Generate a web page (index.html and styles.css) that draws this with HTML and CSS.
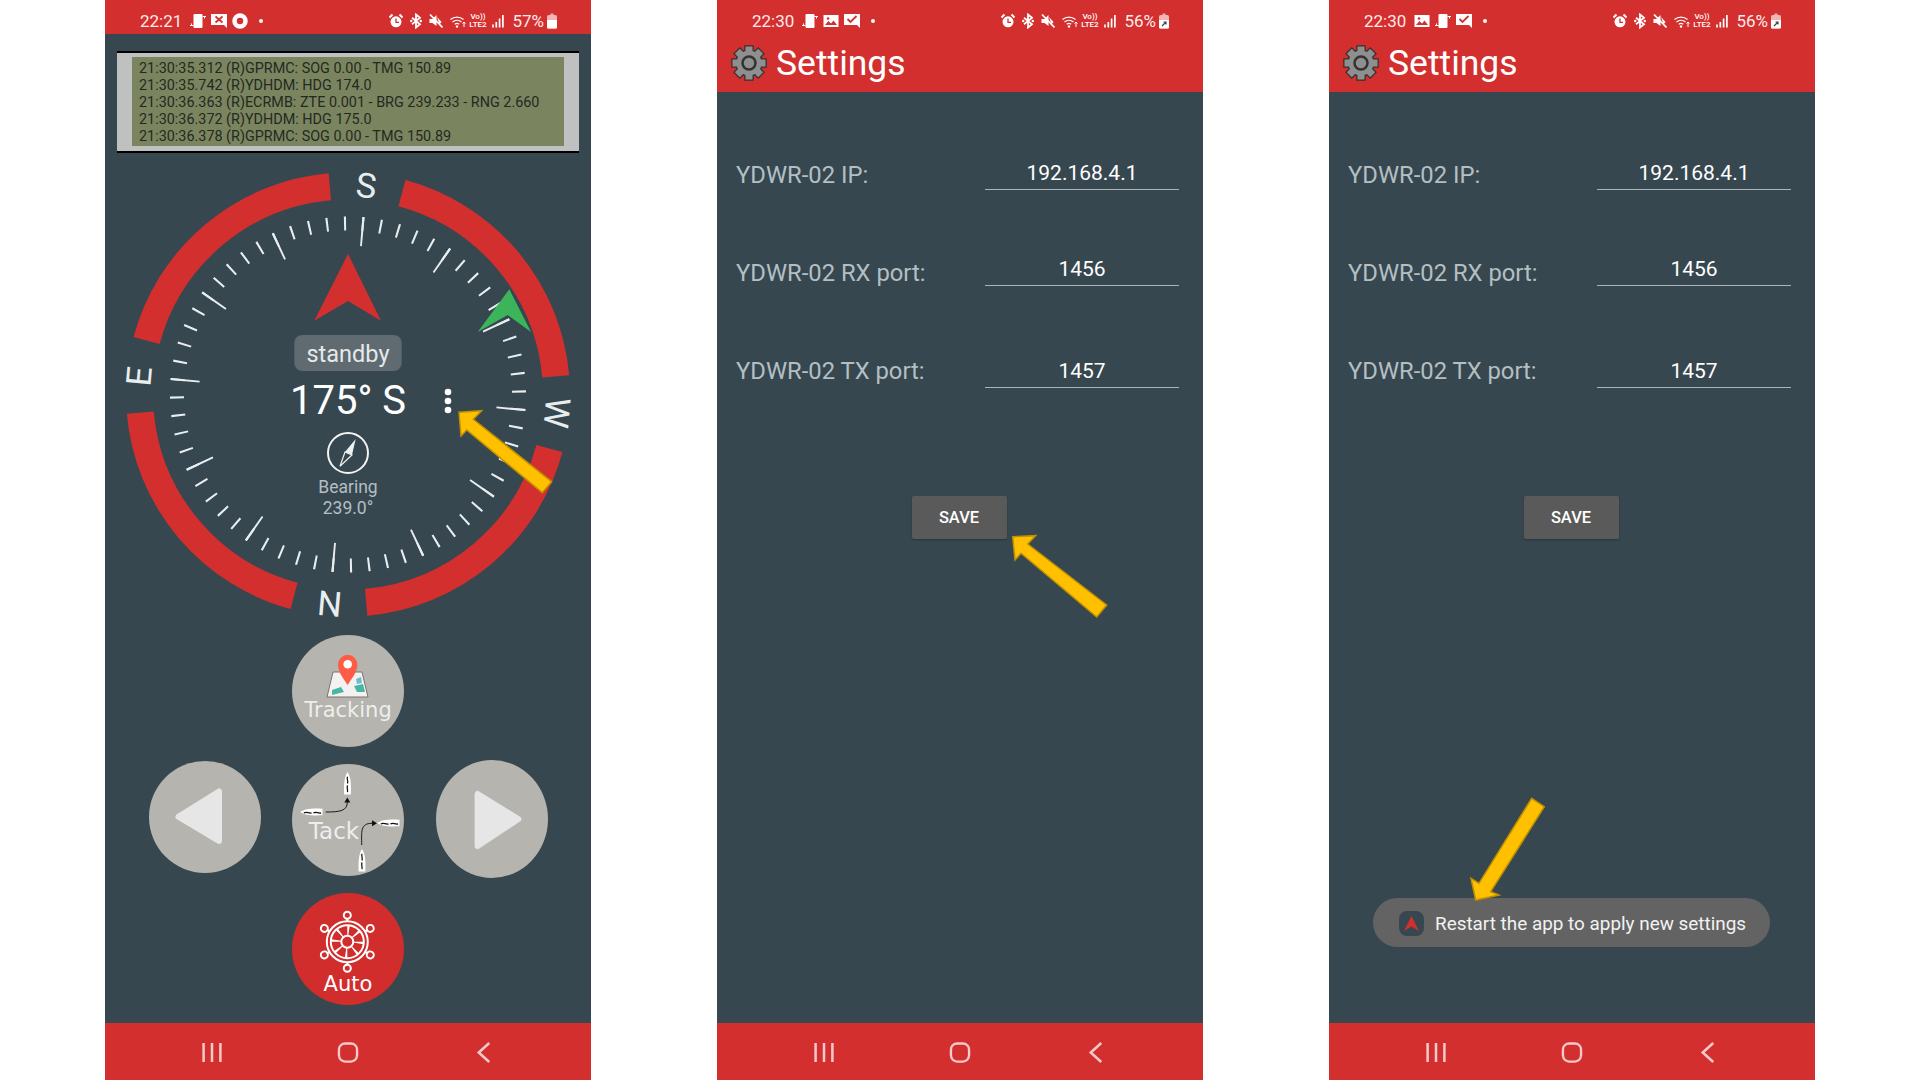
FILE: index.html
```html
<!DOCTYPE html>
<html lang="en">
<head>
    <meta charset="UTF-8">
    <title>Autopilot screens</title>
    <link rel="stylesheet" href="styles.css">
</head>
<body>
<svg class="defs" width="0" height="0">
    <symbol id="ic-phone" viewBox="0 0 16 16">
        <rect x="3.500" y="1" width="9" height="14" rx="1" fill="#fff"/>
        <path d="M0 12.500h3.500M12.500 3.500h3.500M1.500 12.500v-2M14.500 3.500v2" stroke="#fff" stroke-width="1" fill="none"/>
    </symbol>
    <symbol id="ic-xmsg" viewBox="0 0 16 16">
        <path d="M0 1h16v14l-3-3H0z" fill="#fff"/>
        <path d="M4.500 3.500l7 6M11.500 3.500l-7 6" stroke="#d32f2f" stroke-width="1.800"/>
    </symbol>
    <symbol id="ic-checkmsg" viewBox="0 0 16 16">
        <path d="M0 1h16v14l-3-3H0z" fill="#fff"/>
        <path d="M3.500 6l3 3 6-6" stroke="#d32f2f" stroke-width="1.800" fill="none"/>
    </symbol>
    <symbol id="ic-image" viewBox="0 0 16 16">
        <rect x="0.500" y="2" width="15" height="12" fill="#fff"/>
        <path d="M2 12l3.500-4 2.500 2.500 2.500-3L14 12z" fill="#d32f2f"/>
        <circle cx="5" cy="5.500" r="1.300" fill="#d32f2f"/>
    </symbol>
    <symbol id="ic-ring" viewBox="0 0 16 16">
        <circle cx="8" cy="8" r="5.500" fill="none" stroke="#fff" stroke-width="4.500"/>
    </symbol>
    <symbol id="ic-alarm" viewBox="0 0 14 14">
        <circle cx="7" cy="7.800" r="5.500" fill="#fff"/>
        <path d="M7 4.500V8.300H10" stroke="#d32f2f" stroke-width="1.300" fill="none"/>
        <path d="M0.500 3.500l3-3M13.500 3.500l-3-3" stroke="#fff" stroke-width="2"/>
    </symbol>
    <symbol id="ic-bt" viewBox="0 0 12 14">
        <path d="M2 3.800l8 6.400-4 3.300V0.500l4 3.300-8 6.400" stroke="#fff" stroke-width="1.800" fill="none"/>
        <circle cx="1.200" cy="7" r="1.200" fill="#fff"/>
        <circle cx="10.800" cy="7" r="1.200" fill="#fff"/>
    </symbol>
    <symbol id="ic-mute" viewBox="0 0 14 14">
        <path d="M0.500 5h3l4-4v11l-4-3h-3z" fill="#fff"/>
        <path d="M1 0.500l12.500 13" stroke="#fff" stroke-width="1.800"/>
        <path d="M8 3l4.500 5-2 2.500z" fill="#fff"/>
    </symbol>
    <symbol id="ic-wifi" viewBox="0 0 16 14">
        <path d="M0.500 5.500a10 10 0 0 1 13 0M2.500 8a7 7 0 0 1 9 0M4.800 10.300a3.600 3.600 0 0 1 4.400 0" stroke="#fff" stroke-width="1.200" fill="none"/>
        <circle cx="7" cy="12.500" r="1.200" fill="#fff"/>
        <path d="M14 13V8M12.500 9.500L14 8l1.500 1.500" stroke="#fff" stroke-width="1" fill="none"/>
    </symbol>
    <symbol id="ic-signal" viewBox="0 0 12 14">
        <path d="M1 10.500v3M4.300 8v5.500M7.600 4.500v9M10.900 1v12.500" stroke="#fff" stroke-width="1.700"/>
    </symbol>
    <symbol id="ic-batt" viewBox="0 0 10 16">
        <path d="M3.500 0.500h3v1.500h-3z" fill="#f2b5b5"/>
        <rect x="0" y="2" width="10" height="13.500" rx="1.500" fill="#f2b5b5"/>
        <path d="M0 7h10v7a1.500 1.500 0 0 1-1.500 1.500h-7A1.500 1.500 0 0 1 0 14z" fill="#fff"/>
    </symbol>
    <symbol id="ic-charge" viewBox="0 0 10 16">
        <path d="M3.500 0.500h3v1.500h-3z" fill="#f2b5b5"/>
        <rect x="0" y="2" width="10" height="13.500" rx="1.500" fill="#f2b5b5"/>
        <path d="M0 7h10v7a1.500 1.500 0 0 1-1.500 1.500h-7A1.500 1.500 0 0 1 0 14z" fill="#fff"/>
        <path d="M3 13l4-4M4.500 9H7v2.500" stroke="#444" stroke-width="1.200" fill="none"/>
    </symbol>
    <symbol id="ic-nav-recent" viewBox="0 0 20 20">
        <path d="M2 1v18M10 1v18M18 1v18" stroke="#f4c9c9" stroke-width="2.400" fill="none"/>
    </symbol>
    <symbol id="ic-nav-home" viewBox="0 0 22 22">
        <rect x="1.500" y="1.500" width="19" height="19" rx="6.500" stroke="#f4c9c9" stroke-width="2.500" fill="none"/>
    </symbol>
    <symbol id="ic-nav-back" viewBox="0 0 14 20">
        <path d="M12 1L2 10l10 9" stroke="#f4c9c9" stroke-width="2.400" fill="none"/>
    </symbol>
    <g id="gear-shape">
        <circle cx="18" cy="18" r="12.500"/>
        <rect x="14.500" y="1.500" width="7" height="33"/>
        <rect x="14.500" y="1.500" width="7" height="33" transform="rotate(45 18 18)"/>
        <rect x="14.500" y="1.500" width="7" height="33" transform="rotate(90 18 18)"/>
        <rect x="14.500" y="1.500" width="7" height="33" transform="rotate(135 18 18)"/>
    </g>
    <symbol id="ic-gear" viewBox="0 0 36 36">
        <use href="#gear-shape" fill="#333" stroke="#333" stroke-width="2.500"/>
        <use href="#gear-shape" fill="#8f8f8f"/>
        <circle cx="18" cy="18" r="6.500" fill="#8f8f8f" stroke="#333" stroke-width="2.500"/>
    </symbol>
    <symbol id="ic-boat-v" viewBox="0 0 8 24">
        <path d="M4 0C7 5 8 10 7.500 23.500H0.500C0 10 1 5 4 0z" fill="#fff"/>
        <path d="M4 5C3 8 5 9 4 12M4 14C3 17 4.500 18 4 21" stroke="#111" stroke-width="1.300" fill="none"/>
    </symbol>
    <symbol id="ic-boat-h" viewBox="0 0 24 8">
        <path d="M24 4C19 7 14 8 .5 7.500V.5C14 0 19 1 24 4z" fill="#fff" transform="rotate(180 12 4)"/>
        <path d="M4 5C7 3 9 6 12 5M14 5C17 3 19 6 22 5" stroke="#111" stroke-width="1.300" fill="none"/>
    </symbol>
    <path id="ring-arc" d="M53.960 -201.400A208.500 208.500 0 0 1 207.710 -18.170"/>
</svg>

<main class="screens">

    <!-- autopilot -->
    <section class="phone">
        <div class="status">
            <div class="status-left">
                <span class="clock">22:21</span>
                <svg class="st-ic"><use href="#ic-phone"/></svg>
                <svg class="st-ic"><use href="#ic-xmsg"/></svg>
                <svg class="st-ic"><use href="#ic-ring"/></svg>
                <span class="st-dot"></span>
            </div>
            <div class="status-right">
                <svg class="st-ic st-ic-14"><use href="#ic-alarm"/></svg>
                <svg class="st-ic st-ic-12"><use href="#ic-bt"/></svg>
                <svg class="st-ic st-ic-14"><use href="#ic-mute"/></svg>
                <svg class="st-ic st-ic-wifi"><use href="#ic-wifi"/></svg>
                <span class="volte">Vo))<br>LTE2</span>
                <svg class="st-ic st-ic-12"><use href="#ic-signal"/></svg>
                <span class="pct">57%</span>
                <svg class="st-ic st-ic-batt"><use href="#ic-batt"/></svg>
            </div>
        </div>

        <div class="log">
            <div class="log-inner">
                <div>21:30:35.312 (R)GPRMC: SOG 0.00 - TMG 150.89</div>
                <div>21:30:35.742 (R)YDHDM: HDG 174.0</div>
                <div>21:30:36.363 (R)ECRMB: ZTE 0.001 - BRG 239.233 - RNG 2.660</div>
                <div>21:30:36.372 (R)YDHDM: HDG 175.0</div>
                <div>21:30:36.378 (R)GPRMC: SOG 0.00 - TMG 150.89</div>
            </div>
        </div>

        <svg class="dial" viewBox="0 153 486 482" width="486" height="482">
            <g transform="translate(243 394.500)">
                <!-- dial is turned 185deg, ticks are dashed circles -->
                <use class="ring" href="#ring-arc"/>
                <use class="ring" href="#ring-arc" transform="rotate(90)"/>
                <use class="ring" href="#ring-arc" transform="rotate(180)"/>
                <use class="ring" href="#ring-arc" transform="rotate(270)"/>
                <circle class="ticks-minor" r="171" pathLength="360" transform="rotate(-85.350)"/>
                <circle class="ticks-major" r="163.500" pathLength="360" transform="rotate(-85.350)"/>
                <text class="dial-letter" transform="rotate(5) translate(0 -210)" dy="0.360em">S</text>
                <text class="dial-letter" transform="rotate(95) translate(0 -210)" dy="0.360em">W</text>
                <text class="dial-letter" transform="rotate(185) translate(0 -210)" dy="0.360em">N</text>
                <text class="dial-letter" transform="rotate(275) translate(0 -210)" dy="0.360em">E</text>

                <polygon fill="#d32f2f" points="0,-140.500 -33.700,-73.800 0,-93.500 33,-73.800"/>
                <polygon fill="#3cb55a" points="161.300,-105.200 129.700,-62.500 159.700,-79.500 183,-62.500"/>

                <rect class="mode-pill" x="-53.700" y="-59.500" width="107.400" height="36" rx="8"/>
                <text class="mode-text" y="-32.800">standby</text>
                <text class="heading" y="19.500">175° S</text>
                <circle class="dot" cx="100" cy="-2.500" r="3.300"/>
                <circle class="dot" cx="100" cy="6.500" r="3.300"/>
                <circle class="dot" cx="100" cy="15.500" r="3.300"/>

                <circle class="bearing-ring" cy="58.500" r="20"/>
                <path fill="#eef1f2" d="M7.700 44.500L-3 57.500 4 60.500z"/>
                <path fill="none" stroke="#eef1f2" stroke-width="1.200" d="M-8 71.800L-3 57.500 4 60.500z"/>
                <text class="bearing-text" y="98.500">Bearing</text>
                <text class="bearing-text" y="119">239.0°</text>
            </g>
        </svg>

        <div class="pad">
            <button class="round">
                <svg class="round-art" viewBox="0 0 112 112">
                    <path d="M41 37h29l6 25H35z" fill="#f4f1f1" stroke="#77756f" stroke-width="1"/>
                    <path d="M40 55l9-3 3 5-12 3zM62 51l9-2 2 8-8 0z" fill="#48b6a4"/>
                    <path d="M64 44l5-2 1 6-5 1z" fill="#6abcd2"/>
                    <path d="M55.700 50C50 42 46 36 46 29.500a9.700 9.700 0 0 1 19.400 0C65.400 36 61 42 55.700 50z" fill="#ff5c46"/>
                    <circle cx="55.700" cy="29.300" r="4.300" fill="#fff"/>
                </svg>
                <span class="round-label round-label-tracking">Tracking</span>
            </button>
            <div class="pad-row">
                <button class="round round-left">
                    <svg class="round-art" viewBox="0 0 112 112">
                        <polygon class="tri" points="29.500,55.700 70,30.500 70,80"/>
                    </svg>
                </button>
                <button class="round round-tack">
                    <svg class="round-art" viewBox="0 0 112 112">
                        <use href="#ic-boat-v" x="51" y="8" width="9" height="23"/>
                        <use href="#ic-boat-h" x="8" y="43.500" width="23" height="9"/>
                        <use href="#ic-boat-h" x="85" y="54.500" width="23" height="9"/>
                        <use href="#ic-boat-v" x="65.500" y="85" width="9" height="23"/>
                        <path d="M33.700 48C48 48 55.300 47 55.300 38M69.700 81C69.700 68 68 59.300 80 59.300" stroke="#1c1c1c" stroke-width="1" fill="none"/>
                        <path d="M55.300 33.500l-3 5h6zM85 59.300l-5-3v6z" fill="#111"/>
                    </svg>
                    <span class="round-label round-label-tack">Tack</span>
                </button>
                <button class="round round-right">
                    <svg class="round-art" viewBox="0 0 112 112">
                        <polygon class="tri" points="82.300,59 41.600,34 41.600,86"/>
                    </svg>
                </button>
            </div>
            <button class="round round-auto">
                <svg class="round-art" viewBox="0 0 112 112">
                    <g transform="translate(55.300 48.700)" fill="none" stroke="#fff" stroke-width="2">
                        <circle r="20.500"/>
                        <circle r="16.500"/>
                        <circle r="6"/>
                        <circle r="11.200" stroke-width="10.500" pathLength="360" stroke-dasharray="9 36"/>
                        <g id="helm-handle">
                            <path d="M0 -20.500V-23"/>
                            <circle cy="-26.500" r="3.500"/>
                        </g>
                        <use href="#helm-handle" transform="rotate(60)"/>
                        <use href="#helm-handle" transform="rotate(120)"/>
                        <use href="#helm-handle" transform="rotate(180)"/>
                        <use href="#helm-handle" transform="rotate(240)"/>
                        <use href="#helm-handle" transform="rotate(300)"/>
                    </g>
                </svg>
                <span class="round-label round-label-auto">Auto</span>
            </button>
        </div>

        <nav class="navbar">
            <svg class="nav-ic"><use href="#ic-nav-recent"/></svg>
            <svg class="nav-ic"><use href="#ic-nav-home"/></svg>
            <svg class="nav-ic"><use href="#ic-nav-back"/></svg>
        </nav>

        <svg class="pointer" viewBox="0 0 486 1080">
            <polygon points="354,412.300 376.700,410.700 368.300,419.300 446.700,481.700 437.300,492.700 361.700,430 356,436"/>
        </svg>
    </section>

    <!-- settings, save -->
    <section class="phone">
        <div class="status">
            <div class="status-left">
                <span class="clock">22:30</span>
                <svg class="st-ic"><use href="#ic-phone"/></svg>
                <svg class="st-ic"><use href="#ic-image"/></svg>
                <svg class="st-ic"><use href="#ic-checkmsg"/></svg>
                <span class="st-dot"></span>
            </div>
            <div class="status-right">
                <svg class="st-ic st-ic-14"><use href="#ic-alarm"/></svg>
                <svg class="st-ic st-ic-12"><use href="#ic-bt"/></svg>
                <svg class="st-ic st-ic-14"><use href="#ic-mute"/></svg>
                <svg class="st-ic st-ic-wifi"><use href="#ic-wifi"/></svg>
                <span class="volte">Vo))<br>LTE2</span>
                <svg class="st-ic st-ic-12"><use href="#ic-signal"/></svg>
                <span class="pct">56%</span>
                <svg class="st-ic st-ic-batt"><use href="#ic-charge"/></svg>
            </div>
        </div>
        <header class="appbar">
            <svg class="gear"><use href="#ic-gear"/></svg>
            <h1>Settings</h1>
        </header>
        <div class="form">
            <div class="field field-ip"><label>YDWR-02 IP:</label><div class="value">192.168.4.1</div></div>
            <div class="field field-rx"><label>YDWR-02 RX port:</label><div class="value">1456</div></div>
            <div class="field field-tx"><label>YDWR-02 TX port:</label><div class="value">1457</div></div>
            <button class="save">SAVE</button>
        </div>
        <nav class="navbar">
            <svg class="nav-ic"><use href="#ic-nav-recent"/></svg>
            <svg class="nav-ic"><use href="#ic-nav-home"/></svg>
            <svg class="nav-ic"><use href="#ic-nav-back"/></svg>
        </nav>
        <svg class="pointer" viewBox="0 0 486 1080">
            <polygon points="295.700,536.700 318.700,535.700 310.700,544 389.700,605 379.700,617 304,553.300 298,560"/>
        </svg>
    </section>

    <!-- settings, toast -->
    <section class="phone">
        <div class="status">
            <div class="status-left">
                <span class="clock">22:30</span>
                <svg class="st-ic"><use href="#ic-image"/></svg>
                <svg class="st-ic"><use href="#ic-phone"/></svg>
                <svg class="st-ic"><use href="#ic-checkmsg"/></svg>
                <span class="st-dot"></span>
            </div>
            <div class="status-right">
                <svg class="st-ic st-ic-14"><use href="#ic-alarm"/></svg>
                <svg class="st-ic st-ic-12"><use href="#ic-bt"/></svg>
                <svg class="st-ic st-ic-14"><use href="#ic-mute"/></svg>
                <svg class="st-ic st-ic-wifi"><use href="#ic-wifi"/></svg>
                <span class="volte">Vo))<br>LTE2</span>
                <svg class="st-ic st-ic-12"><use href="#ic-signal"/></svg>
                <span class="pct">56%</span>
                <svg class="st-ic st-ic-batt"><use href="#ic-charge"/></svg>
            </div>
        </div>
        <header class="appbar">
            <svg class="gear"><use href="#ic-gear"/></svg>
            <h1>Settings</h1>
        </header>
        <div class="form">
            <div class="field field-ip"><label>YDWR-02 IP:</label><div class="value">192.168.4.1</div></div>
            <div class="field field-rx"><label>YDWR-02 RX port:</label><div class="value">1456</div></div>
            <div class="field field-tx"><label>YDWR-02 TX port:</label><div class="value">1457</div></div>
            <button class="save">SAVE</button>
        </div>
        <nav class="navbar">
            <svg class="nav-ic"><use href="#ic-nav-recent"/></svg>
            <svg class="nav-ic"><use href="#ic-nav-home"/></svg>
            <svg class="nav-ic"><use href="#ic-nav-back"/></svg>
        </nav>
        <div class="toast">
            <svg class="toast-ic" viewBox="0 0 25 25">
                <rect width="25" height="25" rx="8" fill="#37474f"/>
                <polygon points="12.500,5 5,20 12.500,15.500 20,20" fill="#d32f2f"/>
            </svg>
            <span>Restart the app to apply new settings</span>
        </div>
        <svg class="pointer" viewBox="0 0 486 1080">
            <polygon points="202.700,798.300 215.300,806.700 161.700,891.700 170,895 146.700,900 142,878.300 150,883.300"/>
        </svg>
    </section>

</main>
</body>
</html>
```
FILE: styles.css
```css
* {
    box-sizing: border-box;
}
body {
    margin: 0;
    background: #fff;
    font-family: Roboto, "Liberation Sans", sans-serif;
}
.defs {
    position: absolute;
}
.screens {
    display: flex;
    gap: 126px;
    height: 1080px;
    padding-left: 105px;
    overflow: hidden;
}
.phone {
    position: relative;
    display: flex;
    flex-direction: column;
    width: 486px;
    height: 1080px;
    background: #37474f;
}

/* status bar */
.status {
    display: flex;
    justify-content: space-between;
    align-items: center;
    height: 34px;
    padding: 8px 34px 0 35px;
    background: #d32f2f;
    color: #fbeaea;
    font-size: 17px;
}
.status-left,
.status-right {
    display: flex;
    align-items: center;
}
.status-left {
    gap: 5px;
}
.clock {
    margin-right: 3px;
}
.st-ic {
    width: 16px;
    height: 16px;
}
.st-dot {
    width: 4px;
    height: 4px;
    margin-left: 6px;
    border-radius: 50%;
    background: #fff;
}
.status-right {
    gap: 7px;
}
.st-ic-14 {
    width: 14px;
}
.st-ic-12 {
    width: 12px;
}
.st-ic-wifi {
    margin-right: -6px;
}
.st-ic-batt {
    width: 10px;
    margin-left: -4px;
}
.volte {
    width: 21px;
    margin-right: -3px;
    font-size: 8px;
    line-height: 8px;
    font-weight: 500;
    text-align: center;
    color: #fff;
}
.pct {
    margin-left: 1px;
}

/* nmea log */
.log {
    height: 102px;
    margin: 17px 12px 0;
    padding: 4px 15px;
    border-top: 2px solid #000;
    border-bottom: 2px solid #000;
    background: #bfc1c0;
}
.log-inner {
    height: 89px;
    padding: 3px 7px 0;
    background: #7a8560;
    color: #24291f;
    font-size: 14.400px;
    line-height: 17px;
    white-space: nowrap;
}

/* compass */
.dial {
    display: block;
    flex: none;
}
.dial text {
    font-family: Roboto, "Liberation Sans", sans-serif;
    text-anchor: middle;
}
.ring {
    fill: none;
    stroke: #d32f2f;
    stroke-width: 27;
}
.ticks-minor {
    fill: none;
    stroke: #e8eef0;
    stroke-width: 14;
    stroke-dasharray: 0.700 5.300;
}
.ticks-major {
    fill: none;
    stroke: #e8eef0;
    stroke-width: 29;
    stroke-dasharray: 0.700 29.300;
}
.dial .dial-letter {
    fill: #e8eef0;
    font-size: 34.500px;
}
.mode-pill {
    fill: #5f6b71;
}
.dial .mode-text {
    fill: #e6e9ea;
    font-size: 23.500px;
}
.dial .heading {
    fill: #fff;
    font-size: 40px;
}
.dot {
    fill: #fff;
}
.bearing-ring {
    fill: none;
    stroke: #f1f3f4;
    stroke-width: 2;
}
.dial .bearing-text {
    fill: #b4bec3;
    font-size: 17.500px;
}

/* round buttons */
.pad {
    display: flex;
    flex-direction: column;
    align-items: center;
    gap: 17px;
}
.pad-row {
    display: flex;
    align-items: flex-start;
    gap: 31.500px;
    height: 112px;
}
.round {
    position: relative;
    display: flex;
    flex: none;
    justify-content: center;
    width: 112px;
    height: 112px;
    padding: 0;
    border: none;
    border-radius: 50%;
    background: #b5b4ae;
    font-family: "DejaVu Sans", sans-serif;
}
.round-left {
    margin-top: -3px;
}
.round-right {
    height: 118px;
    margin-top: -4px;
}
.round-auto {
    background: #d12d2d;
}
.round-art {
    position: absolute;
    inset: 0;
    width: 112px;
    height: 112px;
}
.round-label {
    position: relative;
    font-size: 21px;
    line-height: 24px;
    color: #eeeeec;
}
.round-label-tracking {
    padding-top: 63px;
}
.round-label-tack {
    padding: 55px 28px 0 0;
    font-size: 23px;
}
.round-label-auto {
    padding-top: 79px;
    color: #fff;
}
.tri {
    fill: #e6e6e6;
    stroke: #e6e6e6;
    stroke-width: 6;
    stroke-linejoin: round;
}

/* nav bar */
.navbar {
    display: flex;
    justify-content: center;
    align-items: center;
    gap: 112px;
    height: 57px;
    margin-top: auto;
    padding-top: 2px;
    background: #d32f2f;
}
.nav-ic {
    width: 24px;
    height: 21px;
}

/* settings */
.appbar {
    display: flex;
    align-items: center;
    height: 58px;
    padding-left: 14px;
    background: #d32f2f;
}
.gear {
    width: 36px;
    height: 36px;
}
.appbar h1 {
    margin: 0 0 0 9px;
    color: #fff;
    font-size: 35.500px;
    font-weight: 400;
}
.form {
    display: flex;
    flex-direction: column;
    gap: 58px;
    padding: 60px 24px 0 19px;
}
.field {
    display: flex;
    align-items: flex-end;
    justify-content: space-between;
    height: 38px;
}
.field label {
    color: #b3bfc3;
    font-size: 23.800px;
    line-height: 28px;
}
.field-ip label {
    margin-bottom: 1px;
}
.field-rx label {
    margin-bottom: -1px;
}
.field-tx {
    margin-top: 6px;
}
.field-tx label {
    margin-bottom: 3px;
}
.value {
    width: 194px;
    padding-bottom: 3px;
    border-bottom: 1.500px solid #a9b5b9;
    color: #fff;
    font-size: 21px;
    line-height: 25px;
    text-align: center;
}
.save {
    align-self: center;
    width: 95px;
    height: 43px;
    margin-top: 50px;
    margin-left: 3px;
    padding: 0;
    border: none;
    border-radius: 2px;
    background: #5a5a5a;
    box-shadow: 0 1px 2px rgba(0, 0, 0, 0.25);
    color: #fff;
    font-family: Roboto, sans-serif;
    font-size: 16.500px;
    font-weight: 500;
}

/* things on top */
.toast {
    position: absolute;
    left: 44px;
    bottom: 133px;
    display: flex;
    align-items: center;
    gap: 11px;
    width: 397px;
    height: 49px;
    padding: 1px 0 0 26px;
    border-radius: 25px;
    background: #636363;
    color: #f2f2f2;
    font-size: 18.900px;
    white-space: nowrap;
}
.toast-ic {
    width: 25px;
    height: 25px;
}
.pointer {
    position: absolute;
    inset: 0;
    width: 486px;
    height: 1080px;
    pointer-events: none;
}
.pointer polygon {
    fill: #ffc000;
    stroke: #bf9000;
    stroke-width: 1.500;
}
```
